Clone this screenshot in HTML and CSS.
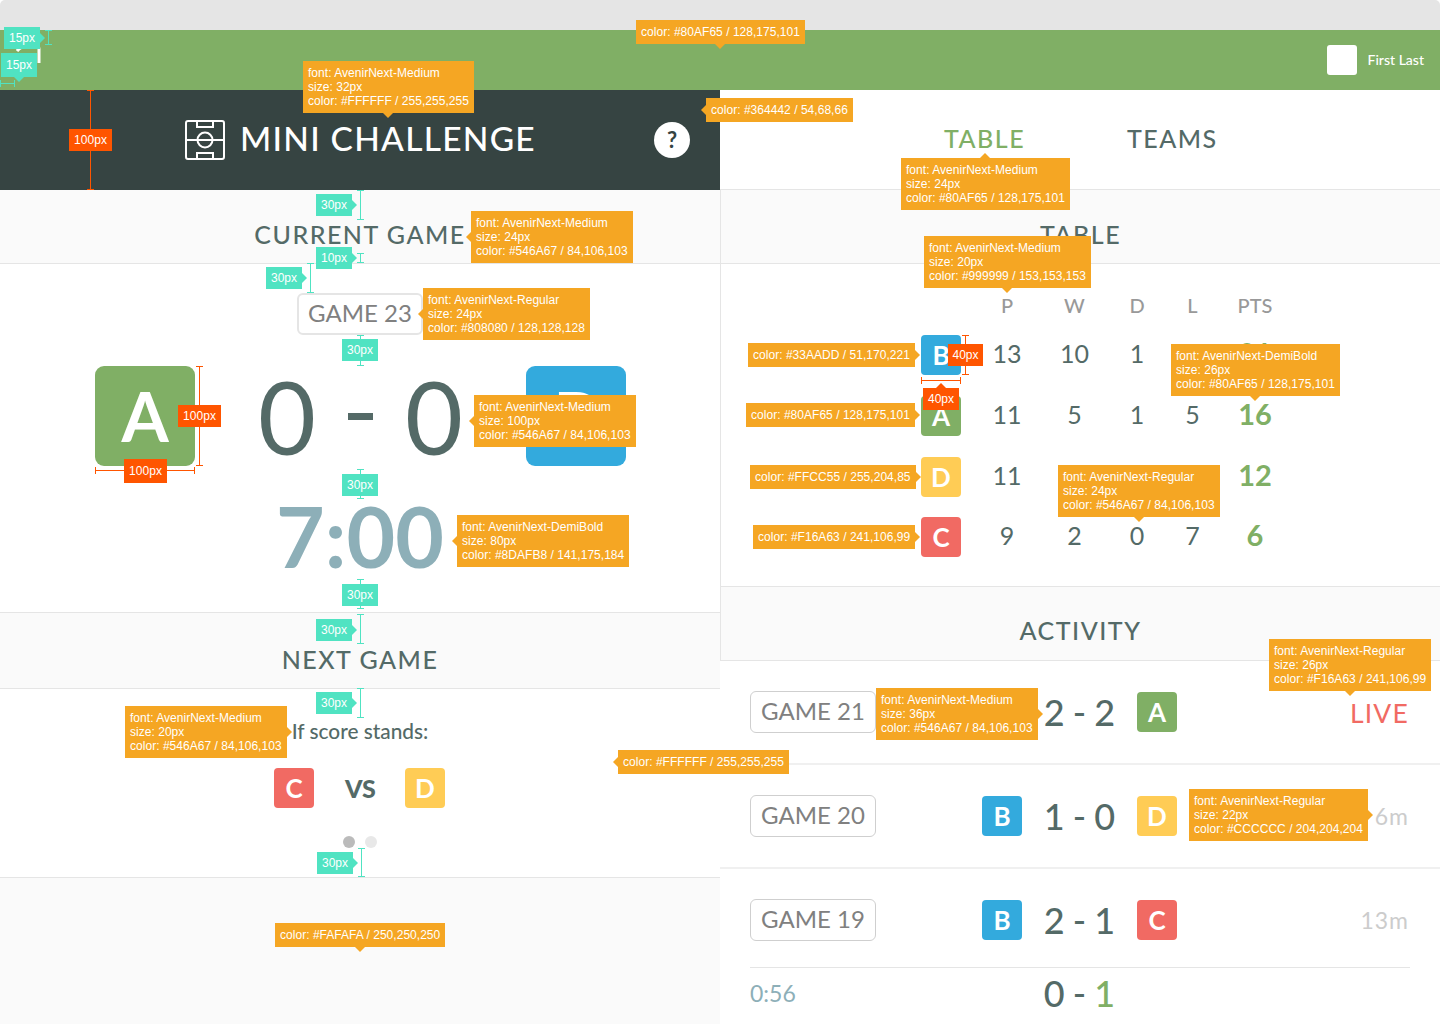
FILE: index.html
```html
<!DOCTYPE html>
<html lang="en">
<head>
  <meta charset="UTF-8">
  <meta name="viewport" content="width=device-width, initial-scale=1.0">
  <title>Mini Challenge spec</title>
  <link rel="stylesheet" href="styles.css">
</head>
<body>
  <div class="page">
    <div class="chrome"></div>

    <!-- Top bar -->
    <header class="topbar">
      <svg class="logo" width="26" height="30" viewBox="0 0 26 30" fill="none" stroke="#fff" stroke-width="3">
        <path d="M2 6 C5 2 9 1 14 1"/>
        <path d="M21 1 C23 1 24 2 24 4 L24 18"/>
      </svg>
      <div class="user">
        <div class="avatar"></div>
        <span class="user-name">First Last</span>
      </div>
    </header>

    <div class="columns">
      <!-- Left column -->
      <main class="left">
        <div class="hero">
          <div class="hero-title">
            <svg class="pitch" width="40" height="40" viewBox="0 0 40 40" fill="none" stroke="#fff" stroke-width="2">
              <rect x="1" y="1" width="38" height="38" rx="2"/>
              <path d="M1 20H39"/>
              <circle cx="20" cy="20" r="7.5"/>
              <path d="M12 1V7H28V1"/>
              <path d="M12 39V33H28V39"/>
            </svg>
            <h1>MINI CHALLENGE</h1>
          </div>
          <div class="help">?</div>
        </div>

        <h2 class="section-head">CURRENT GAME</h2>
        <section class="current">
          <div class="game-tag">GAME 23</div>
          <div class="score-row">
            <div class="team-big team-a">A</div>
            <div class="score-big">
              <span>0</span><span class="dash"></span><span>0</span>
            </div>
            <div class="team-big team-b">B</div>
          </div>
          <div class="clock">7:00</div>
        </section>

        <h2 class="section-head next-head">NEXT GAME</h2>
        <section class="next">
          <p class="stands">If score stands:</p>
          <div class="matchup">
            <div class="badge team-c">C</div>
            <span class="vs">VS</span>
            <div class="badge team-d">D</div>
          </div>
          <div class="dots">
            <span class="dot dot-on"></span>
            <span class="dot"></span>
          </div>
        </section>
        <div class="left-rest"></div>
      </main>

      <!-- Right column -->
      <aside class="right">
        <nav class="tabs">
          <span class="tab tab-on">TABLE</span>
          <span class="tab">TEAMS</span>
        </nav>

        <div class="right-framed">
          <h2 class="section-head">TABLE</h2>
          <div class="standings">
            <div class="st-row st-head">
              <span></span><span>P</span><span>W</span><span>D</span><span>L</span><span>PTS</span>
            </div>
            <div class="st-row">
              <div class="badge team-b">B</div><span>13</span><span>10</span><span>1</span><span>2</span><span class="pts">31</span>
            </div>
            <div class="st-row">
              <div class="badge team-a">A</div><span>11</span><span>5</span><span>1</span><span>5</span><span class="pts">16</span>
            </div>
            <div class="st-row">
              <div class="badge team-d">D</div><span>11</span><span>3</span><span>3</span><span>5</span><span class="pts">12</span>
            </div>
            <div class="st-row">
              <div class="badge team-c">C</div><span>9</span><span>2</span><span>0</span><span>7</span><span class="pts">6</span>
            </div>
          </div>
          <h2 class="section-head activity-head">ACTIVITY</h2>
        </div>

        <div class="activity">
          <div class="game-row">
            <div class="game-tag">GAME 21</div>
            <span></span>
            <div class="game-score">2 - 2</div>
            <div class="badge team-a">A</div>
            <div class="status live">LIVE</div>
          </div>
          <div class="game-row">
            <div class="game-tag">GAME 20</div>
            <div class="badge team-b">B</div>
            <div class="game-score">1 - 0</div>
            <div class="badge team-d">D</div>
            <div class="status">6m</div>
          </div>
          <div class="game-row game-row-plain">
            <div class="game-tag">GAME 19</div>
            <div class="badge team-b">B</div>
            <div class="game-score">2 - 1</div>
            <div class="badge team-c">C</div>
            <div class="status">13m</div>
          </div>
          <div class="goal-row">
            <div class="goal-time">0:56</div>
            <div class="game-score">0 - <span class="goal-point">1</span></div>
          </div>
        </div>
      </aside>
    </div>

    <!-- Spec annotations, drawn over the design -->
    <div class="specs">
      <i class="bracket-v br-top"></i>
      <i class="bracket-h br-left"></i>
      <i class="bracket-v br-head"></i>
      <i class="bracket-v br-head-low"></i>
      <i class="bracket-v br-tag"></i>
      <i class="bracket-v br-tag-low"></i>
      <i class="bracket-v br-clock"></i>
      <i class="bracket-v br-clock-low"></i>
      <i class="bracket-v br-next"></i>
      <i class="bracket-v br-stands"></i>
      <i class="bracket-v br-dots"></i>
      <i class="bracket-v red br-hero"></i>
      <i class="bracket-v red br-team-h"></i>
      <i class="bracket-h red br-team-w"></i>
      <i class="bracket-v red br-badge-h"></i>
      <i class="bracket-h red br-badge-w"></i>

      <div class="gap to-right g-top">15px</div>
      <div class="gap to-bottom g-left">15px</div>
      <div class="gap to-right g-head">30px</div>
      <div class="gap to-right g-head-low">10px</div>
      <div class="gap to-right g-tag">30px</div>
      <div class="gap g-tag-low">30px</div>
      <div class="gap g-clock">30px</div>
      <div class="gap g-clock-low">30px</div>
      <div class="gap to-right g-next">30px</div>
      <div class="gap to-right g-stands">30px</div>
      <div class="gap to-right g-dots">30px</div>

      <div class="dim d-hero">100px</div>
      <div class="dim d-team-h">100px</div>
      <div class="dim d-team-w">100px</div>
      <div class="dim d-badge-h">40px</div>
      <div class="dim to-top d-badge-w">40px</div>

      <div class="note to-bottom n-topbar">color: #80AF65 / 128,175,101</div>
      <div class="note to-bottom n-title">font: AvenirNext-Medium<br>size: 32px<br>color: #FFFFFF / 255,255,255</div>
      <div class="note to-left n-hero">color: #364442 / 54,68,66</div>
      <div class="note to-left n-current">font: AvenirNext-Medium<br>size: 24px<br>color: #546A67 / 84,106,103</div>
      <div class="note to-left n-tag">font: AvenirNext-Regular<br>size: 24px<br>color: #808080 / 128,128,128</div>
      <div class="note to-left n-score">font: AvenirNext-Medium<br>size: 100px<br>color: #546A67 / 84,106,103</div>
      <div class="note to-left n-clock">font: AvenirNext-DemiBold<br>size: 80px<br>color: #8DAFB8 / 141,175,184</div>
      <div class="note to-right n-stands">font: AvenirNext-Medium<br>size: 20px<br>color: #546A67 / 84,106,103</div>
      <div class="note to-left n-white">color: #FFFFFF / 255,255,255</div>
      <div class="note to-bottom n-rest">color: #FAFAFA / 250,250,250</div>
      <div class="note to-top n-tab">font: AvenirNext-Medium<br>size: 24px<br>color: #80AF65 / 128,175,101</div>
      <div class="note to-bottom n-head">font: AvenirNext-Medium<br>size: 20px<br>color: #999999 / 153,153,153</div>
      <div class="note to-right n-blue">color: #33AADD / 51,170,221</div>
      <div class="note to-right n-green">color: #80AF65 / 128,175,101</div>
      <div class="note to-right n-yellow">color: #FFCC55 / 255,204,85</div>
      <div class="note to-right n-red">color: #F16A63 / 241,106,99</div>
      <div class="note to-bottom n-pts">font: AvenirNext-DemiBold<br>size: 26px<br>color: #80AF65 / 128,175,101</div>
      <div class="note to-bottom n-cell">font: AvenirNext-Regular<br>size: 24px<br>color: #546A67 / 84,106,103</div>
      <div class="note to-bottom n-live">font: AvenirNext-Regular<br>size: 26px<br>color: #F16A63 / 241,106,99</div>
      <div class="note to-right n-game-score">font: AvenirNext-Medium<br>size: 36px<br>color: #546A67 / 84,106,103</div>
      <div class="note to-right n-status">font: AvenirNext-Regular<br>size: 22px<br>color: #CCCCCC / 204,204,204</div>
    </div>
  </div>
</body>
</html>
```

FILE: styles.css
```css
/* General Reset */
* {
  margin: 0;
  padding: 0;
  box-sizing: border-box;
}

body {
  font-family: 'Lato', 'Open Sans', sans-serif;
  background: #fff;
  color: #546a67;
  overflow: hidden;
}

.page {
  position: relative;
  width: 1440px;
  height: 1024px;
  overflow: hidden;
}

.chrome {
  height: 30px;
  background: #e5e5e5;
  border-radius: 5px 5px 0 0;
}

/* Top bar */
.topbar {
  height: 60px;
  background: #80af65;
  display: flex;
  align-items: center;
  justify-content: space-between;
  padding: 0 16px 0 15px;
}

.user {
  display: flex;
  align-items: center;
  gap: 11px;
}

.avatar {
  width: 30px;
  height: 30px;
  background: #fff;
  border-radius: 3px;
}

.user-name {
  color: #fff;
  font-size: 14px;
  font-weight: 500;
  padding-bottom: 2px;
}

.columns {
  display: grid;
  grid-template-columns: 720px 720px;
  height: 934px;
}

/* Left column */
.left {
  display: flex;
  flex-direction: column;
}

.hero {
  height: 100px;
  background: #364442;
  display: flex;
  align-items: center;
  justify-content: space-between;
  padding: 0 30px 0 185px;
}

.hero-title {
  display: flex;
  align-items: center;
  gap: 15px;
}

.hero-title h1 {
  color: #fff;
  font-size: 33.5px;
  font-weight: 500;
  letter-spacing: 1.25px;
  line-height: 40px;
  padding-bottom: 4px;
}

.help {
  width: 36px;
  height: 36px;
  border-radius: 50%;
  background: #fff;
  color: #364442;
  font-size: 22px;
  font-weight: 700;
  line-height: 36px;
  text-align: center;
}

.section-head {
  height: 74px;
  padding-top: 28px;
  background: #fafafa;
  border-bottom: 1px solid #e5e5e5;
  color: #546a67;
  font-size: 25px;
  font-weight: 500;
  letter-spacing: 1.5px;
  line-height: 32px;
  text-align: center;
}

.game-tag {
  width: 126px;
  height: 42px;
  border: 2px solid #e5e5e5;
  border-radius: 6px;
  color: #808080;
  font-size: 24px;
  line-height: 35px;
  text-align: center;
  white-space: nowrap;
}

.current {
  height: 348px;
  padding-top: 29px;
  display: flex;
  flex-direction: column;
  align-items: center;
}

.score-row {
  width: 100%;
  height: 100px;
  margin-top: 31px;
  padding: 0 94px 0 95px;
  display: flex;
  align-items: center;
  justify-content: space-between;
}

.team-big {
  width: 100px;
  height: 100px;
  border-radius: 9px;
  color: #fff;
  font-size: 68px;
  font-weight: 700;
  line-height: 100px;
  text-align: center;
}

.team-a { background: #80af65; }
.team-b { background: #33aadd; }
.team-c { background: #f16a63; }
.team-d { background: #ffcc55; }

.score-big {
  display: flex;
  align-items: center;
  font-size: 100px;
  font-weight: 400;
  line-height: 100px;
  color: #546a67;
}

.dash {
  width: 25px;
  height: 7px;
  margin: 0 32px;
  background: #546a67;
}

.clock {
  margin-top: 30px;
  color: #8dafb8;
  font-size: 84px;
  font-weight: 700;
  line-height: 80px;
}

.next-head {
  height: 77px;
  padding-top: 30px;
  border-top: 1px solid #e5e5e5;
}

.next {
  height: 188px;
  padding-top: 29px;
  display: flex;
  flex-direction: column;
  align-items: center;
}

.stands {
  font-size: 20.8px;
  font-weight: 500;
  line-height: 26px;
}

.matchup {
  margin: 24px 1px 0 0;
  display: flex;
  align-items: center;
  gap: 31px;
}

.vs {
  width: 29px;
  font-size: 25px;
  font-weight: 900;
  text-align: center;
}

.badge {
  width: 40px;
  height: 40px;
  border-radius: 4px;
  color: #fff;
  font-size: 26px;
  font-weight: 700;
  line-height: 40px;
  text-align: center;
}

.dots {
  margin-top: 28px;
  display: flex;
  gap: 10px;
}

.dot {
  width: 12px;
  height: 12px;
  border-radius: 50%;
  background: #e8e8e8;
}

.dot-on {
  background: #bbb;
}

.left-rest {
  flex: 1;
  background: #fafafa;
  border-top: 1px solid #e5e5e5;
}

/* Right column */
.tabs {
  height: 99px;
  display: grid;
  grid-template-columns: 183px auto;
  justify-content: start;
  padding: 0 0 3px 224px;
  align-items: center;
}

.tab {
  font-size: 25px;
  font-weight: 500;
  letter-spacing: 1.5px;
  color: #546a67;
}

.tab-on {
  color: #80af65;
}

.right-framed {
  border-left: 1px solid #e5e5e5;
  border-top: 1px solid #e5e5e5;
}

.standings {
  height: 322px;
  padding: 26px 0 0 200px;
}

.st-row {
  display: grid;
  grid-template-columns: 55px 62px 73px 52px 59px 66px;
  align-items: center;
  height: 61px;
  font-size: 25px;
  text-align: center;
}

.st-row > span {
  padding-bottom: 4px;
}

.st-row:last-child {
  margin-top: -1px;
}

.st-row.st-head {
  height: 34px;
  color: #999;
  font-size: 20px;
  font-weight: 500;
}

.pts {
  color: #80af65;
  font-size: 29px;
  font-weight: 700;
}

.activity-head {
  height: 75px;
  padding-top: 27px;
  border-top: 1px solid #e5e5e5;
}

.game-row {
  height: 104px;
  padding: 30px 31px 0 30px;
  border-bottom: 2px solid #f0f0f0;
  display: grid;
  grid-template-columns: 232px 40px 115px 40px 1fr;
  align-items: start;
}

.game-row .game-tag {
  border: 1px solid #cfcfcf;
  line-height: 38px;
}

.game-row .badge {
  margin-top: 1px;
}

.game-row-plain {
  height: 98px;
  border-bottom: 0;
}

.game-score {
  font-size: 36px;
  font-weight: 500;
  line-height: 42px;
  word-spacing: -1px;
  text-align: center;
  white-space: nowrap;
}

.status {
  color: #ccc;
  font-size: 23px;
  line-height: 42px;
  letter-spacing: 1px;
  text-align: right;
}

.live {
  margin-top: 1px;
  color: #f16a63;
  font-size: 26.5px;
  letter-spacing: 1.2px;
}

.goal-row {
  margin: 0 30px;
  padding-top: 4px;
  border-top: 1px solid #e5e5e5;
  display: grid;
  grid-template-columns: 272px 115px;
  align-items: center;
}

.goal-time {
  color: #8dafb8;
  font-size: 23px;
}

.goal-point {
  color: #80af65;
}

/* Spec annotations */
.specs {
  position: absolute;
  inset: 0;
  pointer-events: none;
  color: #fff;
  font-family: 'Liberation Sans', Arial, sans-serif;
  font-size: 12px;
  line-height: 14px;
  letter-spacing: 0.03px;
}

.note,
.gap,
.dim {
  position: absolute;
  white-space: nowrap;
}

.note {
  padding: 5px;
  background: #f5a623;
  --tip: #f5a623;
}

.gap {
  height: 22px;
  width: 36px;
  line-height: 22px;
  text-align: center;
  background: #50e3c2;
  --tip: #50e3c2;
}

.dim {
  height: 22px;
  width: 43px;
  line-height: 22px;
  text-align: center;
  background: #ff5500;
  --tip: #ff5500;
}

.to-left::after,
.to-right::after,
.to-top::after,
.to-bottom::after {
  content: '';
  position: absolute;
  border: 5px solid transparent;
}

.to-left::after {
  right: 100%;
  top: 50%;
  margin-top: -5px;
  border-left-width: 0;
  border-right-color: var(--tip);
}

.to-right::after {
  left: 100%;
  top: 50%;
  margin-top: -5px;
  border-right-width: 0;
  border-left-color: var(--tip);
}

.to-top::after {
  bottom: 100%;
  left: 50%;
  margin-left: -5px;
  border-top-width: 0;
  border-bottom-color: var(--tip);
}

.to-bottom::after {
  top: 100%;
  left: 50%;
  margin-left: -5px;
  border-bottom-width: 0;
  border-top-color: var(--tip);
}

/* measuring brackets */
.bracket-v,
.bracket-h {
  position: absolute;
  border-color: #50e3c2;
  border-style: solid;
  border-width: 0;
}

.bracket-v {
  width: 7px;
  background: linear-gradient(currentColor, currentColor) center / 1px 100% no-repeat;
  color: #50e3c2;
  border-top-width: 1px;
  border-bottom-width: 1px;
}

.bracket-h {
  height: 7px;
  background: linear-gradient(currentColor, currentColor) center / 100% 1px no-repeat;
  color: #50e3c2;
  border-left-width: 1px;
  border-right-width: 1px;
}

.bracket-v.red,
.bracket-h.red {
  border-color: #ff5500;
  color: #ff5500;
}

.br-top { left: 45px; top: 30px; height: 15px; }
.br-left { left: 0; top: 80px; width: 15px; }
.br-head { left: 357px; top: 190px; height: 30px; }
.br-head-low { left: 357px; top: 253px; height: 10px; }
.br-tag { left: 307px; top: 263px; height: 30px; }
.br-tag-low { left: 357px; top: 335px; height: 31px; }
.br-clock { left: 357px; top: 469px; height: 30px; }
.br-clock-low { left: 357px; top: 579px; height: 30px; }
.br-next { left: 357px; top: 614px; height: 30px; }
.br-stands { left: 357px; top: 688px; height: 30px; }
.br-dots { left: 358px; top: 848px; height: 29px; }
.br-hero { left: 87px; top: 90px; height: 100px; }
.br-team-h { left: 196px; top: 366px; height: 100px; }
.br-team-w { left: 95px; top: 467px; width: 100px; }
.br-badge-h { left: 962px; top: 335px; height: 40px; }
.br-badge-w { left: 921px; top: 377px; width: 40px; }

.g-top { left: 4px; top: 27px; }
.g-left { left: 1px; top: 53px; height: 24px; line-height: 24px; }
.g-head { left: 316px; top: 194px; }
.g-head-low { left: 316px; top: 247px; }
.g-tag { left: 266px; top: 267px; }
.g-tag-low { left: 342px; top: 339px; }
.g-clock { left: 342px; top: 474px; }
.g-clock-low { left: 342px; top: 584px; }
.g-next { left: 316px; top: 619px; }
.g-stands { left: 316px; top: 692px; }
.g-dots { left: 317px; top: 852px; }

.d-hero { left: 69px; top: 129px; }
.d-team-h { left: 178px; top: 405px; }
.d-team-w { left: 124px; top: 459px; height: 24px; line-height: 24px; }
.d-badge-h { left: 948px; top: 344px; width: 35px; }
.d-badge-w { left: 923px; top: 388px; width: 36px; }

.n-topbar { left: 636px; top: 20px; }
.n-title { left: 303px; top: 61px; }
.n-hero { left: 706px; top: 98px; }
.n-current { left: 471px; top: 211px; }
.n-tag { left: 423px; top: 288px; }
.n-score { left: 474px; top: 395px; }
.n-clock { left: 457px; top: 515px; }
.n-stands { left: 125px; top: 706px; }
.n-white { left: 618px; top: 750px; }
.n-rest { left: 275px; top: 923px; }
.n-tab { left: 901px; top: 158px; }
.n-head { left: 924px; top: 236px; }
.n-blue { left: 748px; top: 343px; }
.n-green { left: 746px; top: 403px; }
.n-yellow { left: 750px; top: 465px; }
.n-red { left: 753px; top: 525px; }
.n-pts { left: 1171px; top: 344px; }
.n-cell { left: 1058px; top: 465px; }
.n-live { left: 1269px; top: 639px; }
.n-game-score { left: 876px; top: 688px; }
.n-status { left: 1189px; top: 789px; }
```
